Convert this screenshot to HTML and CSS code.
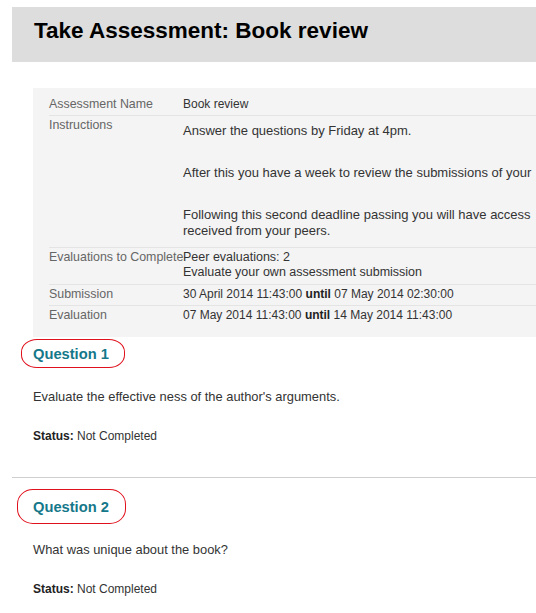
FILE: index.html
```html
<!DOCTYPE html>
<html>
<head>
<meta charset="utf-8">
<title>Take Assessment: Book review</title>
<link rel="stylesheet" href="styles.css">
</head>
<body>
<div class="page">
  <div class="page-header">
    <h1 class="page-title">Take Assessment: Book review</h1>
  </div>

  <div class="details">
    <table class="details-table">
      <tr>
        <th>Assessment Name</th>
        <td>Book review</td>
      </tr>
      <tr>
        <th>Instructions</th>
        <td class="instructions">
          <p>Answer the questions by Friday at 4pm.</p>
          <p>After this you have a week to review the submissions of your</p>
          <p>Following this second deadline passing you will have access<br>received from your peers.</p>
        </td>
      </tr>
      <tr>
        <th>Evaluations to Complete</th>
        <td class="multi">Peer evaluations: 2<br>Evaluate your own assessment submission</td>
      </tr>
      <tr>
        <th>Submission</th>
        <td>30 April 2014 11:43:00 <b>until</b> 07 May 2014 02:30:00</td>
      </tr>
      <tr>
        <th>Evaluation</th>
        <td>07 May 2014 11:43:00 <b>until</b> 14 May 2014 11:43:00</td>
      </tr>
    </table>
  </div>

  <div class="question question-first">
    <h3 class="question-title">Question 1<span class="mark mark-one"></span></h3>
    <p class="question-text">Evaluate the effective ness of the author's arguments.</p>
    <p class="question-status"><b>Status:</b> Not Completed</p>
  </div>

  <div class="question question-next">
    <h3 class="question-title">Question 2<span class="mark mark-two"></span></h3>
    <p class="question-text">What was unique about the book?</p>
    <p class="question-status"><b>Status:</b> Not Completed</p>
  </div>
</div>
</body>
</html>
```

FILE: styles.css
```css
html, body {
  margin: 0;
  padding: 0;
  background: #ffffff;
  overflow: hidden;
}

body {
  font-family: "Liberation Sans", Arial, sans-serif;
  color: #333333;
}

.page {
  padding: 7px 0 0 12px;
  overflow: hidden;
}

.page-header {
  background: #dddddd;
  padding: 11px 0 18px 22px;
}

.page-title {
  margin: 0;
  font-size: 22.5px;
  line-height: 26px;
  font-weight: bold;
  color: #000000;
  white-space: nowrap;
}

.details {
  margin: 26px 0 0 21px;
  background: #f4f4f4;
  padding: 7px 0 11px 16px;
  overflow: hidden;
}

.details-table {
  border-collapse: collapse;
  white-space: nowrap;
}

.details-table th,
.details-table td {
  padding: 2px 0 4px 0;
  vertical-align: top;
  text-align: left;
  font-size: 12px;
  line-height: 14px;
}

.details-table tr + tr th,
.details-table tr + tr td {
  border-top: 1px solid #e4e4e4;
}

.details-table th {
  width: 134px;
  min-width: 134px;
  max-width: 134px;
  font-size: 12.4px;
  font-weight: normal;
  color: #666666;
}

.details-table td {
  color: #333333;
  width: 100%;
}

.details-table td b {
  color: #222222;
}

.details-table td.multi {
  font-size: 12.5px;
  line-height: 15px;
}

.instructions p {
  margin: 5px 0 26px 0;
  font-size: 13px;
  line-height: 16px;
}

.instructions p:last-child {
  margin-bottom: 4px;
}

.question {
  padding-left: 21px;
}

.question-first {
  margin-top: 8px;
  padding-bottom: 33px;
}

.question-next {
  border-top: 1px solid #cfcfcf;
  padding-top: 20px;
}

.question-title {
  position: relative;
  display: inline-block;
  margin: 0;
  font-size: 14.7px;
  line-height: 18px;
  font-weight: bold;
  color: #15788a;
}

.mark {
  position: absolute;
  border: 1px solid #e0101c;
  box-sizing: border-box;
}

.mark-one {
  left: -12px;
  top: -6px;
  width: 104px;
  height: 29px;
  border-radius: 16px / 13px;
}

.mark-two {
  left: -16px;
  top: -9px;
  width: 109px;
  height: 35px;
  border-radius: 16px / 15px;
}

.question-text {
  margin: 25px 0 0 0;
  font-size: 12.9px;
  line-height: 17px;
  color: #333333;
}

.question-status {
  margin: 24px 0 0 0;
  font-size: 12px;
  line-height: 15px;
  color: #333333;
}

.question-status b {
  color: #222222;
}
```
